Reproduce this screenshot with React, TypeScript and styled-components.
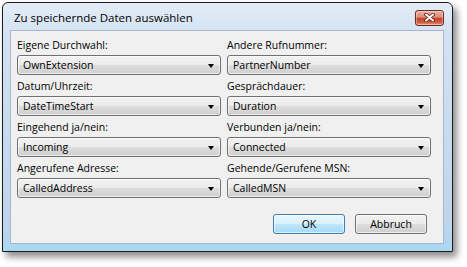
import React from "react";
import styled, { createGlobalStyle } from "styled-components";

const GlobalStyle = createGlobalStyle`
  html, body {
    margin: 0;
    padding: 0;
    background: #ffffff;
  }
  body {
    font-family: "Open Sans", "Liberation Sans", sans-serif;
    font-size: 10.5px;
    color: #000000;
  }
`;

const Desktop = styled.div`
  width: 467px;
  height: 267px;
  padding: 2px 0 0 2px;
  box-sizing: border-box;
`;

const Window = styled.div`
  width: 451px;
  height: 250px;
  box-sizing: border-box;
  display: flex;
  flex-direction: column;
  border: 1px solid #1c1c1c;
  border-radius: 6px 6px 0 0;
  padding: 0 8px 7px 7px;
  background: linear-gradient(
    to bottom,
    #e4edf7 0%,
    #d3e2f2 12%,
    #c6d9ee 60%,
    #bcd4ec 92%,
    #a8d8f2 100%
  );
  box-shadow: 4px 5px 7px rgba(0, 0, 0, 0.45);
`;

const TitleBar = styled.div`
  height: 27px;
  flex-shrink: 0;
  display: flex;
  align-items: center;
  justify-content: space-between;
  padding: 0 0 0 4px;
`;

const Title = styled.span`
  font-size: 11.5px;
  color: #000000;
  padding-top: 1px;
`;

const CloseButton = styled.div`
  width: 29px;
  height: 16px;
  margin-top: 2px;
  box-sizing: border-box;
  display: flex;
  align-items: center;
  justify-content: center;
  border: 1px solid #6e2a20;
  border-radius: 3px;
  background: linear-gradient(
    to bottom,
    #eab2a4 0%,
    #dc8b76 45%,
    #c7432c 50%,
    #cf5a3e 80%,
    #e39c78 100%
  );
  box-shadow: inset 0 0 0 1px rgba(255, 255, 255, 0.35);
`;

const Client = styled.div`
  flex: 1;
  background: #f0f0f0;
  border: 1px solid #a5b8cd;
  padding: 8px 15px 0 6px;
  display: flex;
  flex-direction: column;
`;

const FieldGrid = styled.div`
  display: grid;
  grid-template-columns: 204px 204px;
  column-gap: 6px;
  row-gap: 5px;
`;

const Field = styled.div`
  display: flex;
  flex-direction: column;
`;

const Label = styled.div`
  height: 13px;
  line-height: 13px;
  margin-bottom: 3px;
  white-space: nowrap;
`;

const ComboBox = styled.div`
  height: 20px;
  box-sizing: border-box;
  display: flex;
  align-items: center;
  justify-content: space-between;
  padding: 0 6px 0 5px;
  border: 1px solid #707070;
  border-radius: 3px;
  background: linear-gradient(
    to bottom,
    #f2f2f2 0%,
    #ebebeb 50%,
    #dddddd 51%,
    #cfcfcf 100%
  );
  box-shadow: inset 0 0 0 1px rgba(255, 255, 255, 0.6);
  white-space: nowrap;
`;

const Arrow = styled.span`
  width: 0;
  height: 0;
  border-left: 3.5px solid transparent;
  border-right: 3.5px solid transparent;
  border-top: 4px solid #000000;
  margin-top: 1px;
`;

const ButtonRow = styled.div`
  display: flex;
  justify-content: flex-end;
  gap: 10px;
  margin-top: 16px;
  padding-right: 1px;
`;

const Button = styled.div<{ $default?: boolean }>`
  width: 72px;
  height: 20px;
  box-sizing: border-box;
  display: flex;
  align-items: center;
  justify-content: center;
  border: 1px solid ${(p) => (p.$default ? "#3c7fb1" : "#707070")};
  border-radius: 3px;
  background: ${(p) =>
    p.$default
      ? "linear-gradient(to bottom, #eaf6fd 0%, #d9f0fc 50%, #bee6fd 51%, #a7d9f5 100%)"
      : "linear-gradient(to bottom, #f2f2f2 0%, #ebebeb 50%, #dddddd 51%, #cfcfcf 100%)"};
  box-shadow: inset 0 0 0 1px rgba(255, 255, 255, 0.6);
`;

const fields = [
  { label: "Eigene Durchwahl:", value: "OwnExtension" },
  { label: "Andere Rufnummer:", value: "PartnerNumber" },
  { label: "Datum/Uhrzeit:", value: "DateTimeStart" },
  { label: "Gesprächdauer:", value: "Duration" },
  { label: "Eingehend ja/nein:", value: "Incoming" },
  { label: "Verbunden ja/nein:", value: "Connected" },
  { label: "Angerufene Adresse:", value: "CalledAddress" },
  { label: "Gehende/Gerufene MSN:", value: "CalledMSN" },
];

const CloseGlyph = () => (
  <svg width="11" height="9" viewBox="0 0 11 9">
    <path
      d="M2 1.5 L9 7.5 M9 1.5 L2 7.5"
      stroke="#5a1a12"
      strokeWidth="3.6"
      strokeLinecap="round"
    />
    <path
      d="M2 1.5 L9 7.5 M9 1.5 L2 7.5"
      stroke="#ffffff"
      strokeWidth="2"
      strokeLinecap="round"
    />
  </svg>
);

export default function App() {
  return (
    <>
      <GlobalStyle />
      <Desktop>
        <Window>
          <TitleBar>
            <Title>Zu speichernde Daten auswählen</Title>
            <CloseButton>
              <CloseGlyph />
            </CloseButton>
          </TitleBar>
          <Client>
            <FieldGrid>
              {fields.map((f) => (
                <Field key={f.label}>
                  <Label>{f.label}</Label>
                  <ComboBox>
                    <span>{f.value}</span>
                    <Arrow />
                  </ComboBox>
                </Field>
              ))}
            </FieldGrid>
            <ButtonRow>
              <Button $default>OK</Button>
              <Button>Abbruch</Button>
            </ButtonRow>
          </Client>
        </Window>
      </Desktop>
    </>
  );
}
